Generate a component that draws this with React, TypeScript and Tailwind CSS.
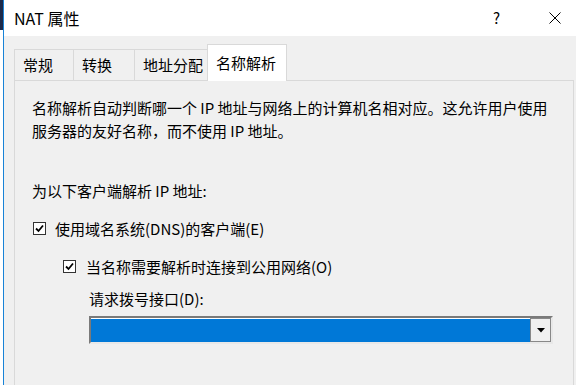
import React from "react";

const font = { fontFamily: '"Microsoft YaHei", "Noto Sans CJK SC", "Noto Sans", sans-serif' };

function Check() {
  return (
    <div className="w-[13px] h-[13px] border border-[#333] bg-white flex items-center justify-center shrink-0">
      <svg width="9" height="9" viewBox="0 0 9 9">
        <path d="M1 4.5 L3.5 7 L8 1.5" fill="none" stroke="#000" strokeWidth="1.8" />
      </svg>
    </div>
  );
}

export default function App() {
  const tabs = ["常规", "转换", "地址分配"];
  return (
    <div className="w-[576px] h-[385px] flex overflow-hidden bg-white text-[#000]" style={font}>
      <div className="w-[3px] flex flex-col shrink-0">
        <div className="h-[30px] bg-[#1b2a4a]" />
        <div className="flex-1 bg-white" />
      </div>
      <div className="w-px bg-[#1883d7] shrink-0" />
      <div className="flex-1 flex flex-col min-h-0">
        <div className="h-[36px] shrink-0 bg-white flex items-center pl-[10px]">
          <span className="text-[16px]">NAT 属性</span>
          <span className="ml-auto text-[15px] mr-[49px]">?</span>
          <svg width="12" height="12" viewBox="0 0 12 12" className="mr-[15px]">
            <path d="M0.5 0.5 L11.5 11.5 M11.5 0.5 L0.5 11.5" stroke="#000" strokeWidth="1" />
          </svg>
        </div>
        <div className="flex-1 min-h-0 overflow-hidden bg-[#f0f0f0] pl-[10px] pt-[8px] pr-[2px]">
          <div className="flex items-end h-[36px]">
            {tabs.map((t, i) => (
              <div
                key={t}
                className={`h-[31px] border-t border-l border-[#d9d9d9] bg-[#f0f0f0] text-[15px] flex items-center pl-[8px] ${
                  i === 0 ? "w-[59px]" : i === 1 ? "w-[61px]" : "w-[74px]"
                } ${i === 2 ? "border-r" : ""}`}
              >
                {t}
              </div>
            ))}
            <div className="h-[37px] -mb-px w-[80px] -ml-px bg-white border-t border-l border-r border-[#d9d9d9] text-[15px] flex items-center pl-[8px] relative z-10">
              名称解析
            </div>
          </div>
          <div className="h-[400px] border border-[#d9d9d9] bg-[#f0f0f0] pl-[17px] pt-[15px] text-[15px] leading-[23px]">
            <p>名称解析自动判断哪一个 IP 地址与网络上的计算机名相对应。这允许用户使用</p>
            <p>服务器的友好名称，而不使用 IP 地址。</p>
            <p className="mt-[37px]">为以下客户端解析 IP 地址:</p>
            <div className="flex items-center gap-[9px] mt-[15px] pl-px">
              <Check />
              <span>使用域名系统(DNS)的客户端(E)</span>
            </div>
            <div className="flex items-center gap-[10px] mt-[15px] pl-[31px]">
              <Check />
              <span>当名称需要解析时连接到公用网络(O)</span>
            </div>
            <p className="mt-[9px] pl-[57px]">请求拨号接口(D):</p>
            <div className="ml-[57px] mt-[6px] w-[464px] h-[28px] flex border-2 border-t-[#7a7a7a] border-l-[#7a7a7a] border-b-[#e8e8e8] border-r-[#e8e8e8]">
              <div className="flex-1 bg-[#0078d7] border-t border-white" />
              <div className="w-[21px] bg-[#f0f0f0] border border-[#888] flex items-center justify-center">
                <svg width="8" height="5" viewBox="0 0 8 5">
                  <path d="M0 0 L8 0 L4 4.5 Z" fill="#000" />
                </svg>
              </div>
            </div>
          </div>
        </div>
      </div>
    </div>
  );
}
